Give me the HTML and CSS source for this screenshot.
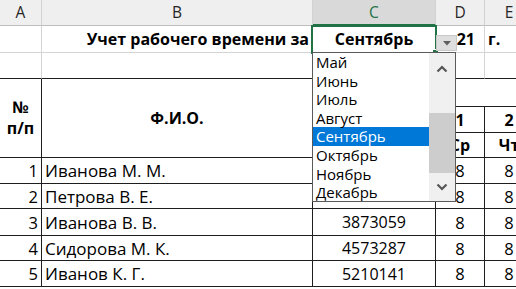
FILE: index.html
```html
<!DOCTYPE html>
<html lang="ru">
<head>
<meta charset="utf-8">
<title>Учет рабочего времени</title>
<link rel="stylesheet" href="styles.css">
</head>
<body>
<div class="sheet">
  <div class="ch">A</div>
  <div class="ch">B</div>
  <div class="ch sel">C</div>
  <div class="ch">D</div>
  <div class="ch">E</div>

  <div class="c"></div>
  <div class="c b right">Учет рабочего времени за</div>
  <div class="c b center">Сентябрь</div>
  <div class="c b year"><span class="hid">20</span>21</div>
  <div class="c b">г.</div>

  <div class="c tb"></div>
  <div class="c tb"></div>
  <div class="c tb"></div>
  <div class="c tb"></div>
  <div class="c tb"></div>

  <div class="c t b center span3 stack"><span>№</span><span>п/п</span></div>
  <div class="c t b center span3">Ф.И.О.</div>
  <div class="c t b center span3"></div>
  <div class="c t span2"></div>
  <div class="c t b center">1</div>
  <div class="c t b center">2</div>
  <div class="c t b center">Ср</div>
  <div class="c t b center">Чт</div>

  <div class="c t right">1</div>
  <div class="c t name">Иванова М. М.</div>
  <div class="c t center num"></div>
  <div class="c t center">8</div>
  <div class="c t center">8</div>

  <div class="c t right">2</div>
  <div class="c t name">Петрова В. Е.</div>
  <div class="c t center num">3456546</div>
  <div class="c t center">8</div>
  <div class="c t center">8</div>

  <div class="c t right">3</div>
  <div class="c t name">Иванова В. В.</div>
  <div class="c t center num">3873059</div>
  <div class="c t center">8</div>
  <div class="c t center">8</div>

  <div class="c t right">4</div>
  <div class="c t name">Сидорова М. К.</div>
  <div class="c t center num">4573287</div>
  <div class="c t center">8</div>
  <div class="c t center">8</div>

  <div class="c t right">5</div>
  <div class="c t name">Иванов К. Г.</div>
  <div class="c t center num">5210141</div>
  <div class="c t center">8</div>
  <div class="c t center">8</div>

  <div class="selbox"><span class="handle"></span></div>

  <div class="dd-btn">
    <svg width="8" height="5" viewBox="0 0 8 5"><polygon points="0,0 8,0 4,4.5" fill="#5f5f5f"/></svg>
  </div>

  <div class="dd">
    <div class="items">
      <div class="it">Май</div>
      <div class="it">Июнь</div>
      <div class="it">Июль</div>
      <div class="it">Август</div>
      <div class="it on">Сентябрь</div>
      <div class="it">Октябрь</div>
      <div class="it">Ноябрь</div>
      <div class="it">Декабрь</div>
    </div>
    <div class="sb">
      <div class="arr up"><svg width="12" height="8" viewBox="0 0 12 8"><polyline points="1.5,6.5 6,2 10.5,6.5" fill="none" stroke="#555" stroke-width="2.2"/></svg></div>
      <div class="track"><div class="thumb"></div></div>
      <div class="arr down"><svg width="12" height="8" viewBox="0 0 12 8"><polyline points="1.5,1.5 6,6 10.5,1.5" fill="none" stroke="#555" stroke-width="2.2"/></svg></div>
    </div>
  </div>
</div>
</body>
</html>
```

FILE: styles.css
```css
html, body {
  margin: 0;
  padding: 0;
  background: #fff;
  overflow: hidden;
}

.sheet {
  position: relative;
  width: 516px;
  height: 289px;
  overflow: hidden;
  display: grid;
  grid-template-columns: 42px 271px 123px 49px 49px;
  grid-template-rows: 26px 27px 26px 28px 26px 25px 26px 25px 27px 25px 26px 26px;
  font-family: "Open Sans", "Noto Sans", sans-serif;
  font-size: 16.5px;
  color: #000;
}

.ch {
  box-sizing: border-box;
  background: #efefef;
  border-right: 1px solid #d2d2d2;
  border-bottom: 1px solid #bdbdbd;
  display: flex;
  align-items: flex-end;
  justify-content: center;
  padding-bottom: 2px;
  color: #262626;
  font-size: 15.5px;
}

.ch.sel {
  background: #d9d9d9;
  color: #217346;
  border-bottom: 2px solid #217346;
  padding-bottom: 1px;
}

.c {
  box-sizing: border-box;
  border-right: 1px solid #d4d4d4;
  border-bottom: 1px solid #d4d4d4;
  display: flex;
  align-items: center;
  padding: 0 3px;
  white-space: nowrap;
  overflow: hidden;
}

.c.tb { border-bottom-color: #1e1e1e; }
.c.t { border-right-color: #1e1e1e; border-bottom-color: #1e1e1e; }
.c.span2 { grid-column: span 2; border-right: none; }
.c.span3 { grid-row: span 3; }

.b { font-weight: 700; font-size: 16px; }
.name { font-size: 17px; }
.num { font-size: 16px; }
.year { justify-content: flex-end; padding-right: 9px; }
.hid { visibility: hidden; }
.right { justify-content: flex-end; }
.center { justify-content: center; }

.stack {
  flex-direction: column;
  line-height: 21px;
}

.selbox {
  position: absolute;
  left: 311px;
  top: 25px;
  width: 126px;
  height: 29px;
  box-sizing: border-box;
  border: 2px solid #217346;
}

.handle {
  position: absolute;
  right: -4px;
  bottom: -4px;
  width: 5px;
  height: 5px;
  background: #217346;
  border: 1px solid #fff;
}

.dd-btn {
  position: absolute;
  z-index: 3;
  left: 436px;
  top: 35px;
  width: 21px;
  height: 16px;
  box-sizing: border-box;
  background: #dedede;
  border: 1px solid #c8c8c8;
  display: flex;
  align-items: center;
  justify-content: center;
}

.dd {
  position: absolute;
  left: 312px;
  top: 52px;
  width: 144px;
  height: 150px;
  box-sizing: border-box;
  border: 1px solid #5a5a5a;
  background: #fff;
  display: flex;
  z-index: 2;
}

.items {
  flex: 1;
  overflow: hidden;
}

.it {
  height: 18.6px;
  line-height: 18.6px;
  padding-left: 3px;
  font-size: 15px;
  color: #000;
}

.it.on {
  background: #0078d7;
  color: #fff;
}

.sb {
  width: 26px;
  background: #f0f0f0;
  display: flex;
  flex-direction: column;
}

.arr {
  display: flex;
  align-items: center;
  justify-content: center;
}

.arr.up { height: 32px; }
.arr.down { height: 28px; }

.track {
  flex: 1;
}

.thumb {
  margin-top: 28px;
  height: 60px;
  background: #cdcdcd;
}
```
